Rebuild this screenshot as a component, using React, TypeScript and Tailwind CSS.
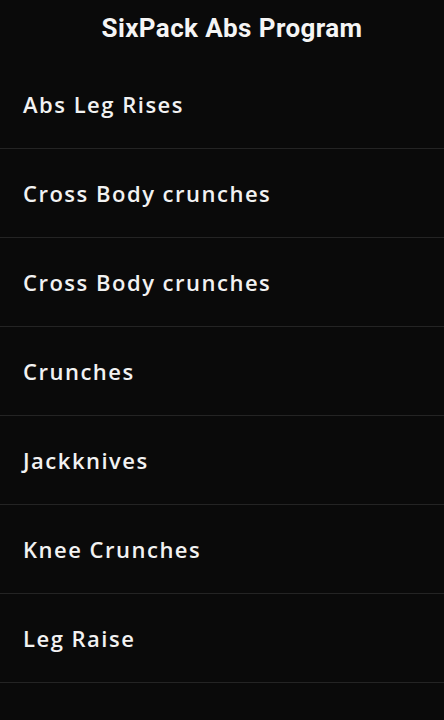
const exercises = [
  'Abs Leg Rises',
  'Cross Body crunches',
  'Cross Body crunches',
  'Crunches',
  'Jackknives',
  'Knee Crunches',
  'Leg Raise',
];

export default function App() {
  return (
    <div className="h-[720px] w-full overflow-hidden bg-[#0a0a0a] text-white">
      {/* Header */}
      <div className="flex h-[60px] items-start justify-center pl-[20px] pt-[11px]">
        <h1 className="font-['Roboto',sans-serif] text-[26px] font-bold leading-[34px] tracking-[0.4px] text-[#f5f5f5]">
          SixPack Abs Program
        </h1>
      </div>

      {/* List */}
      <ul>
        {exercises.map((name, i) => (
          <li
            key={i}
            className="flex h-[89px] items-center border-b border-[#242424] px-[23px]"
          >
            <span className="font-['Open_Sans',sans-serif] text-[22px] font-semibold tracking-[1.5px] text-[#f2f2f2]">
              {name}
            </span>
          </li>
        ))}
      </ul>
    </div>
  );
}
